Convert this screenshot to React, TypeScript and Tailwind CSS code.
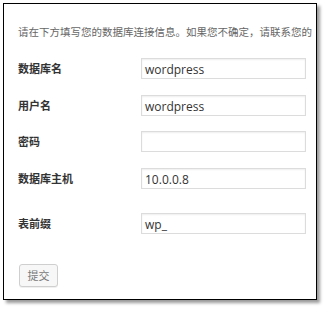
import React from "react";

const cjk = { fontFamily: '"Noto Sans CJK SC", "Noto Sans", sans-serif' };
const latin = { fontFamily: '"Open Sans", "Noto Sans CJK SC", sans-serif' };

function Row({ label, value, className }: { label: string; value: string; className?: string }) {
  return (
    <div className={`flex items-center h-[21px] ${className ?? ""}`}>
      <div className="w-[123px] shrink-0 text-[11px] font-bold text-[#333]" style={cjk}>
        {label}
      </div>
      <div
        className="w-[165px] h-[21px] border border-[#dcdcdc] bg-white shadow-[inset_0_1px_2px_rgba(0,0,0,0.07)] flex items-center pl-[3px] pt-[2px] text-[12px] text-[#333]"
        style={latin}
      >
        {value}
      </div>
    </div>
  );
}

export default function App() {
  return (
    <div className="w-[326px] h-[309px] bg-white relative">
      <div className="absolute left-[3px] top-[3px] w-[314px] h-[297px] border border-black bg-white overflow-hidden shadow-[3px_3px_3px_rgba(0,0,0,0.4)]">
        <div className="pl-[14px] pt-[20px] flex flex-col">
          <div className="whitespace-nowrap text-[10.5px] leading-[16px] text-[#666]" style={cjk}>
            请在下方填写您的数据库连接信息。如果您不确定，请联系您的
          </div>
          <Row label="数据库名" value="wordpress" className="mt-[18px]" />
          <Row label="用户名" value="wordpress" className="mt-[16px]" />
          <Row label="密码" value="" className="mt-[15px]" />
          <Row label="数据库主机" value="10.0.0.8" className="mt-[16px]" />
          <Row label="表前缀" value="wp_" className="mt-[24px]" />
          <div className="mt-[30px] pl-[1px]">
            <button
              className="w-[39px] h-[23px] border border-[#cfcfcf] rounded-[3px] bg-[#f7f7f7] shadow-[0_1px_0_rgba(0,0,0,0.06)] text-[11px] text-[#777] flex items-center justify-center"
              style={cjk}
            >
              提交
            </button>
          </div>
        </div>
      </div>
    </div>
  );
}
